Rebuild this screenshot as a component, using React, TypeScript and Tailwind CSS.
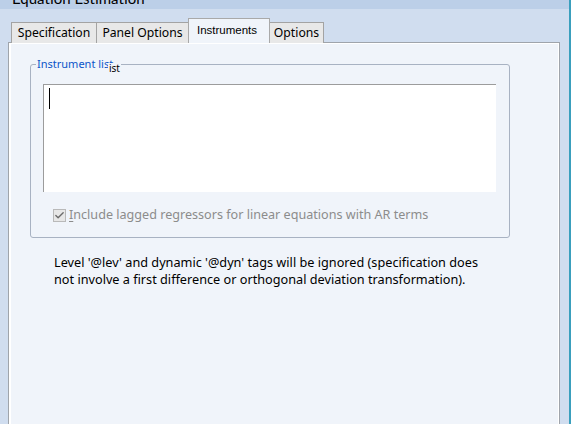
import { Check } from 'lucide-react';

const tabBase = 'h-[21px] flex items-center justify-center border-t border-[#a3a3a3] bg-[#e8e8e8] text-[12.2px] text-black';

export default function App() {
  return (
    <div className="w-[577px] h-[424px] bg-white overflow-hidden font-['Noto_Sans',sans-serif]">
      <div className="w-[571px] h-full flex flex-col bg-[#d0ddef] border-r-2 border-[#3a9fbd]">
        {/* title bar, mostly scrolled off the top */}
        <div className="h-[9px] bg-[#bccfe8] overflow-hidden pl-[12px]">
          <div className="-mt-[12px] text-[15px] leading-[20px] text-black font-['Lato',sans-serif]">Equation Estimation</div>
        </div>

        <div className="flex-1 flex flex-col pl-[8px] pr-[9px] pt-[9px] min-h-0">
          {/* tab strip */}
          <div className="h-[25px] -mb-px flex items-end pl-[3px] relative z-10">
            <div className={`${tabBase} w-[85px] border-l`}>Specification</div>
            <div className={`${tabBase} w-[92px] border-l`}>Panel Options</div>
            <div className="h-[25px] w-[82px] flex items-start justify-center pt-[3px] pr-[4px] border-l border-t border-r border-[#a9a9a9] bg-[#f0f4fa] text-[11.5px] text-black font-['Liberation_Sans',sans-serif]">
              Instruments
            </div>
            <div className={`${tabBase} w-[54px] border-r`}>Options</div>
          </div>

          {/* tab panel */}
          <div className="flex-1 border border-b-0 border-[#9fa4ab] bg-[#f0f4fa]">
            <div className="h-full border-l-2 border-t border-r border-white pl-[19px] pt-[20px]">
              {/* group box */}
              <div className="relative w-[480px] h-[174px] border border-[#a8b2c2] rounded-[3px]">
                <div className="absolute -top-[8px] left-[5px] px-[1px] bg-[#f0f4fa] text-[11px] leading-[14px] text-[#0b55c9]">
                  Instrument list
                </div>
                <div className="absolute -top-[2px] left-[77px] px-[1px] bg-[#f0f4fa] text-[10px] leading-[10px] text-black">
                  ist
                </div>

                <div className="relative ml-[12px] mt-[19px] w-[453px] h-[108px] bg-white border-t border-l border-[#9c9c9c]">
                  <div className="absolute left-[5px] top-[3px] w-px h-[21px] bg-black" />
                </div>

                <div className="flex items-center ml-[22px] mt-[15px] gap-[3px]">
                  <div className="w-[13px] h-[13px] border border-[#b9b9b9] bg-[#e7e7e7] flex items-center justify-center">
                    <Check className="w-[11px] h-[11px] text-[#6b6b6b]" strokeWidth={3} />
                  </div>
                  <span className="text-[12.6px] leading-[16px] text-[#8c8c8c]">
                    <span className="underline underline-offset-2">I</span>nclude lagged regressors for linear equations with AR terms
                  </span>
                </div>
              </div>

              <p className="ml-[24px] mt-[16px] text-[12.7px] leading-[17px] text-black">
                Level '@lev' and dynamic '@dyn' tags will be ignored (specification does
                <br />
                not involve a first difference or orthogonal deviation transformation).
              </p>
            </div>
          </div>
        </div>
      </div>
    </div>
  );
}
